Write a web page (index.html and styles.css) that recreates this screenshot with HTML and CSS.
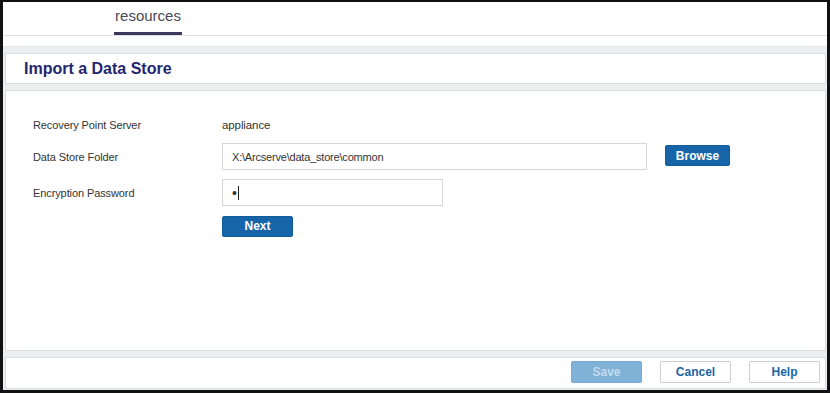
FILE: index.html
```html
<!DOCTYPE html>
<html lang="en">
<head>
  <meta charset="UTF-8">
  <title>Import a Data Store</title>
  <link rel="stylesheet" href="styles.css">
</head>
<body>
<div class="frame">
  <div class="tabs">
    <div class="tab active">resources</div>
  </div>
  <div class="spacer"></div>
  <div class="main">
    <div class="panel head"><h2>Import a Data Store</h2></div>
    <div class="panel body">
      <div class="form">
        <div class="label">Recovery Point Server</div>
        <div class="value">appliance</div>

        <div class="label">Data Store Folder</div>
        <div class="field-row">
          <div class="input wide">X:\Arcserve\data_store\common</div>
          <button class="btn primary browse">Browse</button>
        </div>

        <div class="label">Encryption Password</div>
        <div class="field-row">
          <div class="input narrow">•<span class="caret"></span></div>
        </div>

        <div></div>
        <div class="field-row">
          <button class="btn primary next">Next</button>
        </div>
      </div>
    </div>
    <div class="panel foot">
      <button class="btn disabled">Save</button>
      <button class="btn plain">Cancel</button>
      <button class="btn plain">Help</button>
    </div>
  </div>
</div>
</body>
</html>
```

FILE: styles.css
```css
* {
  box-sizing: border-box;
}
body {
  margin: 0;
  font-family: "Liberation Sans", Arial, sans-serif;
  color: #333;
}
.frame {
  width: 830px;
  height: 393px;
  border-style: solid;
  border-color: #111;
  border-width: 2px 3px 3px 3px;
  background: #eceef0;
  display: flex;
  flex-direction: column;
}
.tabs {
  height: 34px;
  background: #fff;
  border-bottom: 1px solid #dde1e6;
  padding-left: 111px;
  display: flex;
}
.tab {
  font-size: 15px;
  color: #4a4a55;
  padding: 5px 1px 0;
  width: 68px;
  text-align: center;
}
.tab.active {
  border-bottom: 3px solid #3b3a5c;
}
.spacer {
  height: 11px;
  background: #fff;
  border-bottom: 1px solid #e4e7ea;
}
.main {
  flex: 1;
  padding: 6px 1px 1px 2px;
  display: flex;
  flex-direction: column;
}
.panel {
  background: #fff;
  border: 1px solid #d9dde2;
}
.head {
  height: 31px;
  padding-left: 18px;
  display: flex;
  align-items: center;
}
.head h2 {
  margin: 0;
  font-size: 16px;
  font-weight: bold;
  color: #1f2670;
}
.body {
  margin-top: 6px;
  height: 261px;
  padding: 24px 0 0 27px;
}
.foot {
  margin-top: 6px;
  height: 32px;
  padding: 3px 5px 0 0;
  display: flex;
  justify-content: flex-end;
  gap: 18px;
}
.form {
  display: grid;
  grid-template-columns: 189px 1fr;
  grid-template-rows: 19px 27px 27px 21px;
  row-gap: 9px;
  align-items: center;
  font-size: 11px;
  letter-spacing: -0.1px;
}
.value {
  color: #333;
  font-size: 11.5px;
}
.field-row {
  display: flex;
  align-items: center;
  gap: 18px;
}
.input {
  height: 27px;
  border: 1px solid #d3d6da;
  padding: 0 9px;
  display: flex;
  align-items: center;
  font-size: 11px;
  letter-spacing: -0.2px;
  color: #333;
}
.input.wide {
  width: 425px;
}
.input.narrow {
  width: 221px;
  font-size: 14px;
}
.caret {
  display: inline-block;
  width: 1px;
  height: 14px;
  background: #222;
  margin-left: 1px;
}
.btn {
  font-family: inherit;
  font-size: 12px;
  font-weight: bold;
  letter-spacing: 0;
  height: 22px;
  width: 71px;
  border-radius: 2px;
  padding: 0;
  cursor: pointer;
}
.primary {
  background: #1765a9;
  border: 1px solid #135b99;
  color: #fff;
}
.browse {
  width: 65px;
  height: 21px;
  margin-top: -2px;
}
.next {
  height: 21px;
  margin-top: 1px;
}
.disabled {
  background: #80b1d7;
  border: 1px solid #7aaad2;
  color: #c4daec;
}
.plain {
  background: #fff;
  border: 1px solid #ccd0d4;
  color: #1a65a8;
}
```
